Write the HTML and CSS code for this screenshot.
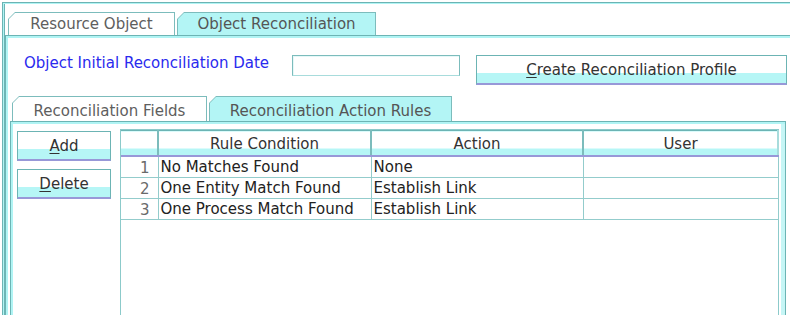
FILE: index.html
```html
<!DOCTYPE html>
<html lang="en">
<head>
  <meta charset="UTF-8">
  <meta name="viewport" content="width=device-width, initial-scale=1.0">
  <title>Object Reconciliation</title>
  <link rel="stylesheet" href="styles.css">
</head>
<body>

<div class="frame">
  <div class="tabs top-tabs">
    <div class="tab tab-resource"><span>Resource Object</span></div>
    <div class="tab tab-recon active"><span>Object Reconciliation</span></div>
  </div>

  <div class="panel">
    <div class="date-row">
      <label class="date-label" for="recon-date">Object Initial Reconciliation Date</label>
      <input class="date-field" type="text" id="recon-date">
      <button class="btn btn-profile"><u>C</u>reate Reconciliation Profile</button>
    </div>

    <div class="subtabs">
      <div class="tabs inner-tabs">
        <div class="tab tab-fields"><span>Reconciliation Fields</span></div>
        <div class="tab tab-rules active"><span>Reconciliation Action Rules</span></div>
      </div>

      <div class="subpanel">
        <div class="side">
          <button class="btn btn-side"><u>A</u>dd</button>
          <button class="btn btn-side"><u>D</u>elete</button>
        </div>

        <div class="scroll">
          <table class="rules">
            <thead>
              <tr>
                <th class="col-num"></th>
                <th class="col-cond">Rule Condition</th>
                <th class="col-action">Action</th>
                <th class="col-user">User</th>
              </tr>
            </thead>
            <tbody>
              <tr>
                <td class="num">1</td>
                <td>No Matches Found</td>
                <td>None</td>
                <td></td>
              </tr>
              <tr>
                <td class="num">2</td>
                <td>One Entity Match Found</td>
                <td>Establish Link</td>
                <td></td>
              </tr>
              <tr>
                <td class="num">3</td>
                <td>One Process Match Found</td>
                <td>Establish Link</td>
                <td></td>
              </tr>
            </tbody>
          </table>
        </div>
      </div>
    </div>
  </div>
</div>

</body>
</html>
```

FILE: styles.css
```css
body {
  margin: 0;
  width: 790px;
  height: 316px;
  overflow: hidden;
  background-color: #fff;
  font-family: "DejaVu Sans", sans-serif;
  font-size: 15px;
}
.frame {
  margin: 2px 0 0 2px;
  width: 788px;
  height: 313px;
  padding: 9px 0 0 2px;
  box-sizing: border-box;
  overflow: hidden;
  border-top: 1px solid #6cb4b4;
  border-left: 1px solid #6cb4b4;
  box-shadow: inset 1px 1px 0 #b0f4f4, inset 2px 0 0 #6cb4b4;
}

/* tabs */
.tabs {
  display: flex;
  gap: 2px;
}
.top-tabs {
  margin-left: 3px;
  height: 23px;
}
.inner-tabs {
  margin-left: 2px;
  height: 25px;
}
.tab {
  padding: 1px 1px 0 1px;
  background-color: #7cbcbc;
  clip-path: polygon(0 7px, 7px 0, 100% 0, 100% 100%, 0 100%);
}
.tab span {
  display: flex;
  align-items: center;
  justify-content: center;
  height: 100%;
  background-color: #fff;
  color: #5e5e5e;
  clip-path: polygon(0 6px, 6px 0, 100% 0, 100% 100%, 0 100%);
}
.inner-tabs .tab span {
  padding-top: 3px;
  box-sizing: border-box;
}
.tab.active span {
  background-color: #b3f5f5;
  color: #555;
}
.tab-resource { width: 165px; }
.tab-recon { width: 197px; }
.tab-fields { width: 193px; }
.tab-rules { width: 241px; }

/* outer panel */
.panel {
  height: 280px;
  padding-top: 19px;
  box-sizing: border-box;
  border-top: 1px solid #6cb4b4;
  border-left: 1px solid #6cb4b4;
  box-shadow: inset 2px 2px 0 #b0f4f4;
}
.date-row {
  display: flex;
  align-items: flex-start;
  padding-left: 18px;
  height: 30px;
}
.date-label {
  width: 268px;
  line-height: 16px;
  color: #2a2aee;
}
.date-field {
  width: 168px;
  height: 21px;
  box-sizing: border-box;
  border: 1px solid #7cbcbc;
  border-bottom-color: #a8dcdc;
  box-shadow: inset 1px 1px 0 #e6f8f8;
  padding: 0;
  margin: 0;
}

/* buttons */
.btn {
  font-family: "DejaVu Sans", sans-serif;
  font-size: 15px;
  color: #333;
  padding: 0;
  margin: 0;
  box-sizing: border-box;
  border: 1px solid #6cb4b4;
  border-bottom: 2px solid #9898d8;
  background: linear-gradient(to bottom, #fff 0, #fff 64%, #b6f6f6 64%, #b6f6f6 100%);
  cursor: pointer;
}
.btn u {
  text-underline-offset: 2px;
}
.btn-profile {
  margin-left: 16px;
  width: 311px;
  height: 30px;
  padding-top: 1px;
}
.btn-side {
  width: 94px;
  height: 30px;
}

/* inner tabbed pane */
.subtabs {
  margin: 11px 0 0 4px;
  width: 776px;
}
.subpanel {
  display: flex;
  height: 200px;
  border-top: 1px solid #6cb4b4;
  border-left: 1px solid #6cb4b4;
  border-right: 1px solid #6cb4b4;
  box-shadow: inset 2px 2px 0 #b0f4f4, inset -4px 0 0 #c6f6f6;
}
.side {
  display: flex;
  flex-direction: column;
  gap: 8px;
  width: 103px;
  padding: 9px 0 0 6px;
}
.scroll {
  margin-top: 7px;
  width: 659px;
  box-sizing: border-box;
  border: 1px solid #8ccaca;
  border-bottom: none;
  background-color: #fff;
}

/* table */
.rules {
  border-collapse: collapse;
  table-layout: fixed;
  width: 657px;
  color: #222;
}
.rules th {
  height: 25px;
  padding: 2px 0 0 0;
  box-sizing: border-box;
  font-weight: normal;
  color: #333;
  border-top: 1px solid #6cb4b4;
  border-right: 2px solid #7cbcbc;
  border-bottom: 2px solid #9898d8;
  background: linear-gradient(to bottom, #fff 0, #fff 72%, #b6f6f6 72%, #b6f6f6 100%);
}
.rules th.col-user {
  border-right-color: #a8dcdc;
}
.col-num { width: 37px; }
.col-cond { width: 213px; }
.col-action { width: 212px; }
.col-user { width: 195px; }
.rules td {
  height: 21px;
  padding: 1px 0 0 2px;
  box-sizing: border-box;
  border-right: 1px solid #93cccc;
  border-bottom: 1px solid #93cccc;
  white-space: nowrap;
}
.rules td.num {
  text-align: right;
  padding: 2px 8px 0 0;
  color: #6a6a6a;
}
```
